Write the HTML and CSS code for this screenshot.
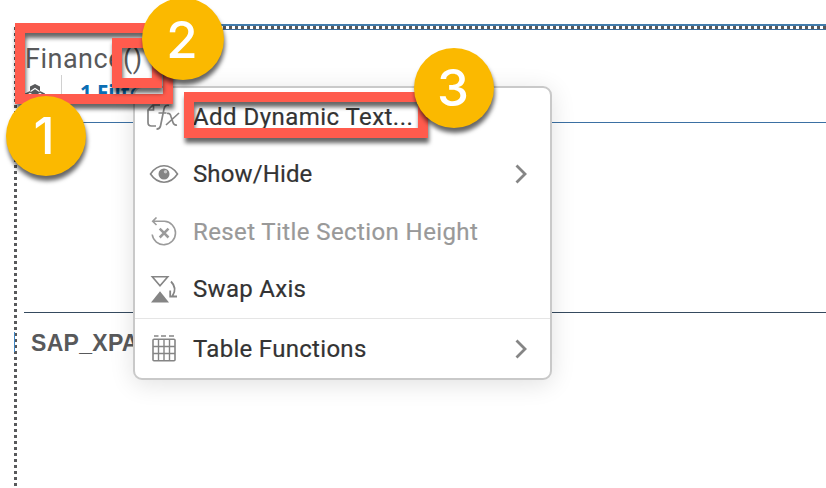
FILE: index.html
```html
<!DOCTYPE html>
<html lang="en">
<head>
<meta charset="utf-8">
<title>Finance table</title>
<link rel="stylesheet" href="styles.css">
</head>
<body>
<main class="table-widget">
  <div class="edge-top"></div>
  <div class="edge-left"></div>
  <header class="table-head">
    <h1 class="title">Finance()</h1>
    <div class="meta">
      <svg class="cubes" width="20" height="20" viewBox="0 0 20 20"><path fill="#58595b" d="M10 0l5 2.400v5L10 10 5 7.400v-5zM5 7l5 2.500v6L5 18l-5-2.500v-6zM15 7l5 2.500v6L15 18l-5-2.500v-6z"/><path fill="none" stroke="#fff" stroke-width="1.100" d="M5.500 7.500L10 4.500l4.500 3M1 12l4-2.700 5 3.200 5-3.200 4 2.700"/></svg>
      <span class="filter">1 Filter</span>
    </div>
  </header>
  <div class="table-gap"></div>
  <div class="table-row">SAP_XPA</div>
</main>

<nav class="menu">
  <div class="item">
    <svg class="icon fx" width="34" height="30" viewBox="0 0 34 30"><g fill="none" stroke="#858585" stroke-width="1.700"><path d="M10 24H5.500Q2 24 2 20.500V8l5-5h7M7.500 3v5H2"/><path d="M23 3.500q-4-1.200-5 3.500l-3.500 17q-.6 3-4 3.200M12.500 11h8"/><path d="M21 11.500q3-1 4 3l2 6q1 3 4 2.500M33 11L20 23"/></g></svg>
    <span class="label l1">Add Dynamic Text...</span>
  </div>
  <div class="item">
    <svg class="icon" width="30" height="30" viewBox="0 0 30 30"><path fill="none" stroke="#858585" stroke-width="1.600" d="M1.500 15Q7 6.800 15 6.800T28.500 15Q23 23.200 15 23.200T1.500 15z"/><circle cx="15" cy="15" r="5.500" fill="#858585"/><circle cx="16.500" cy="12.800" r="1.700" fill="#c9c9c9"/></svg>
    <span class="label l2">Show/Hide</span>
    <svg class="chevron" width="14" height="22" viewBox="0 0 14 22"><path d="M2.500 2.500l8.500 8.500-8.500 8.500"/></svg>
  </div>
  <div class="item disabled">
    <svg class="icon" width="30" height="30" viewBox="0 0 30 30"><g fill="none" stroke="#9b9b9b" stroke-width="1.600"><path d="M4 4.300h11.500A11.700 11.700 0 1 1 3.200 17.500M7.500.500L3.700 4.300 7.500 8"/><path stroke-width="2.500" d="M10.700 11.700l8.800 8.800M19.500 11.700l-8.800 8.800"/></g></svg>
    <span class="label l3">Reset Title Section Height</span>
  </div>
  <div class="item">
    <svg class="icon" width="30" height="30" viewBox="0 0 30 30"><path fill="none" stroke="#858585" stroke-width="1.600" d="M3.300 2.800h15.500L11 11.800z"/><path fill="#858585" d="M2 28.500L11 17.300l9 11.200z"/><path fill="none" stroke="#858585" stroke-width="1.800" d="M22 7.500q6.500 6.500 1.500 14.500M21.200 16.500v6h6.800"/></svg>
    <span class="label l4">Swap Axis</span>
  </div>
  <div class="item last">
    <svg class="icon" width="30" height="30" viewBox="0 0 30 30"><path fill="none" stroke="#858585" stroke-width="1.700" d="M5 2h4.500M12 2h5M20 2h5"/><rect x="4" y="5.300" width="22" height="21.500" rx="1" fill="none" stroke="#858585" stroke-width="1.600"/><path fill="none" stroke="#858585" stroke-width="1.400" d="M9.500 5v22M15 5v22M20.500 5v22M4 12.500h22M4 19.500h22"/></svg>
    <span class="label l5">Table Functions</span>
    <svg class="chevron" width="14" height="22" viewBox="0 0 14 22"><path d="M2.500 2.500l8.500 8.500-8.500 8.500"/></svg>
  </div>
</nav>

<div class="frame frame-title"></div>
<div class="frame frame-parens"></div>
<div class="frame frame-add"></div>
<div class="badge badge-1">1</div>
<div class="badge badge-2">2</div>
<div class="badge badge-3">3</div>
</body>
</html>
```
FILE: styles.css
```css
* { box-sizing: border-box; }
body {
  margin: 0;
  width: 826px;
  height: 488px;
  overflow: hidden;
  position: relative;
  background: #fff;
  font-family: "Open Sans", "Noto Sans", sans-serif;
  color: #333;
}
.table-widget {
  position: relative;
  padding: 24px 0 0 24px;
  height: 488px;
}
.edge-top {
  position: absolute;
  left: 15px;
  right: 0;
  top: 24px;
  height: 6px;
  border-top: 2px solid #427cac;
  border-bottom: 1px solid #3a6c9c;
  background: repeating-linear-gradient(90deg, #58595b 0 1px, #fff 1px 4px, #58595b 4px 6px);
}
.edge-left {
  position: absolute;
  left: 14px;
  top: 27px;
  width: 3px;
  height: 459px;
  background: repeating-linear-gradient(180deg, #58595b 0 3px, #fff 3px 6px);
}
.edge-left::after {
  content: "";
  position: absolute;
  left: 0;
  top: 305px;
  width: 1px;
  height: 20px;
  background: #3f86c4;
}
.table-head {
  height: 99px;
  border-bottom: 1px solid #3b70a3;
  padding-top: 15px;
}
.title {
  margin: 0;
  height: 39px;
  padding-left: 1px;
  font: 400 27px/40px Roboto, sans-serif;
  color: #58595b;
  letter-spacing: 0.5px;
}
.meta {
  display: flex;
  height: 28px;
}
.cubes { flex: none; margin: 6px 0 0 1px; }
.filter {
  margin-left: 16px;
  padding-left: 18px;
  margin-top: -3px;
  border-left: 1px solid #d0d0d0;
  height: 26px;
  font: 700 20.5px/34px "Open Sans", sans-serif;
  color: #0a6eb4;
}
.table-gap { height: 190px; border-bottom: 1px solid #354a5f; }
.table-row {
  padding-left: 7px;
  font: 700 23px/60px "Liberation Sans", sans-serif;
  letter-spacing: 0.3px;
  color: #58595b;
}
.menu {
  position: absolute;
  left: 133px;
  top: 86px;
  width: 419px;
  height: 294px;
  border: 2px solid #c9c9c9;
  border-radius: 9px;
  background: #fff;
  box-shadow: 0 4px 24px rgba(0, 0, 0, 0.12);
}
.item {
  display: flex;
  align-items: center;
  height: 57.5px;
  padding: 0 22px 0 14px;
}
.item.last { border-top: 1px solid #e5e5e5; height: 60px; }
.icon { flex: none; }
.icon.fx { margin: 0 -1px 0 -3px; }
.label {
  margin-left: 14px;
  font: 400 24px/34px Roboto, sans-serif;
  -webkit-text-stroke: 0.2px currentColor;
  white-space: nowrap;
}
.l1 { letter-spacing: 0.45px; }
.l2 { letter-spacing: 0.12px; }
.l3 { letter-spacing: 0.4px; }
.l4 { letter-spacing: 0.3px; }
.l5 { letter-spacing: 0.3px; }
.disabled .label { color: #999; }
.chevron {
  margin-left: auto;
  fill: none;
  stroke: #858585;
  stroke-width: 2.8;
}
.frame {
  position: absolute;
  border: 10px solid #ff5b4d;
  filter: drop-shadow(1px 5px 2px rgba(0, 0, 0, 0.6));
}
.frame-title { left: 15px; top: 23px; width: 158px; height: 81px; }
.frame-parens { left: 112px; top: 38px; width: 50px; height: 50px; }
.frame-add { left: 184px; top: 92px; width: 244px; height: 46px; }
.badge {
  position: absolute;
  width: 80px;
  height: 80px;
  border-radius: 50%;
  background: #fbb900;
  color: #fff;
  font: 500 51px/80px Inter, sans-serif;
  text-align: center;
  box-shadow: 1px 5px 4px rgba(0, 0, 0, 0.6);
}
.badge-1 { left: 6px; top: 96px; padding-right: 4px; }
.badge-2 { left: 142px; top: -2px; width: 82px; height: 82px; line-height: 84px; padding-right: 2px; }
.badge-3 { left: 414px; top: 48px; padding-right: 2px; }
```
